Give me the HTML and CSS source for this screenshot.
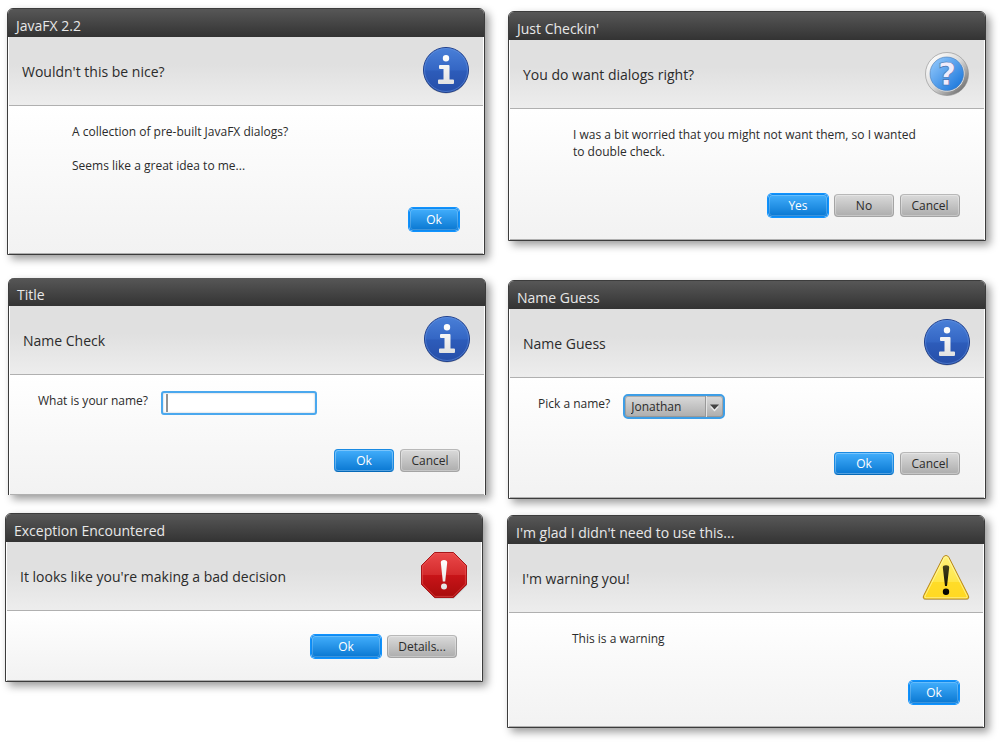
FILE: index.html
```html
<!DOCTYPE html>
<html lang="en">
<head>
<meta charset="utf-8">
<title>JavaFX dialogs</title>
<link rel="stylesheet" href="styles.css">
</head>
<body>
<svg class="defs" aria-hidden="true">
  <defs>
    <linearGradient id="blue" x1="0" y1="0" x2="0" y2="1">
      <stop offset="0" stop-color="#4a80d8"/><stop offset=".5" stop-color="#3466c4"/>
      <stop offset=".52" stop-color="#2d5cba"/><stop offset="1" stop-color="#264ea8"/>
    </linearGradient>
    <linearGradient id="red" x1="0" y1="0" x2="0" y2="1">
      <stop offset="0" stop-color="#ea4a4a"/><stop offset=".5" stop-color="#d42a2c"/>
      <stop offset=".51" stop-color="#c81418"/><stop offset="1" stop-color="#a80c0c"/>
    </linearGradient>
    <linearGradient id="yellow" x1="0" y1="0" x2="0" y2="1">
      <stop offset="0" stop-color="#fff27a"/><stop offset=".6" stop-color="#ffe648"/>
      <stop offset=".62" stop-color="#ffdc28"/><stop offset="1" stop-color="#ffd822"/>
    </linearGradient>
    <linearGradient id="silver" x1="0" y1="0" x2="1" y2="1">
      <stop offset=".1" stop-color="#ffffff"/><stop offset=".5" stop-color="#d8d8d8"/><stop offset=".9" stop-color="#6c6c6c"/>
    </linearGradient>
    <linearGradient id="sky" x1="0" y1="0" x2="1" y2="1">
      <stop offset=".1" stop-color="#8cc4fa"/><stop offset=".9" stop-color="#1c78dc"/>
    </linearGradient>
    <linearGradient id="white" x1="0" y1="0" x2="0" y2="1">
      <stop offset="0" stop-color="#ffffff"/><stop offset="1" stop-color="#e2e2e2"/>
    </linearGradient>
    <linearGradient id="ink" x1="0" y1="0" x2="0" y2="1">
      <stop offset="0" stop-color="#45421c"/><stop offset=".6" stop-color="#1c1a08"/><stop offset="1" stop-color="#000000"/>
    </linearGradient>
    <symbol id="info" viewBox="0 0 48 48">
      <circle cx="24" cy="25" r="22.5" fill="#000" opacity=".25"/>
      <circle cx="24" cy="24" r="22.5" fill="url(#blue)" stroke="#1f3f8c"/>
      <circle cx="24" cy="24" r="21.5" fill="none" stroke="#6a98e4" stroke-opacity=".5"/>
      <path fill="url(#white)" d="M24 9a3.2 3.2 0 1 1 0 6.400a3.200 3.200 0 1 1 0-6.400zM18 19h8.500q1 0 1 1v13.500h3.500q1 0 1 1v2.500q0 1-1 1h-14q-1 0-1-1v-2.500q0-1 1-1h4.500v-10.500h-3.500q-1 0-1-1v-2q0-1 1-1z"/>
    </symbol>
    <symbol id="error" viewBox="0 0 48 48">
      <path d="M15 2.500h19l13 13v19l-13 13h-19l-13-13v-19z" fill="#000" opacity=".2"/>
      <path d="M14.500 1.500h19l13 13v19l-13 13h-19l-13-13v-19z" fill="url(#red)" stroke="#a81618"/>
      <path d="M15 2.600h18l12.400 12.400v18l-12.400 12.400h-18l-12.400-12.400v-18z" fill="none" stroke="#f06060" stroke-opacity=".5"/>
      <path fill="url(#white)" d="M20.800 11.500q0-2.500 3.200-2.500t3.200 2.500l-2 19h-2.400zM24 32.500a3 3 0 1 1 0 6a3 3 0 1 1 0-6z"/>
    </symbol>
    <symbol id="warning" viewBox="0 0 48 48">
      <path d="M24 3q2 0 3 2l19.500 38q1.500 4-2 4h-41q-3.500 0-2-4l19.500-38q1-2 3-2z" fill="#000" opacity=".15"/>
      <path d="M24 2.500q2 0 3 2l19.300 38q1.500 3.500-2 3.500h-40.600q-3.500 0-2-3.500l19.300-38q1-2 3-2z" fill="url(#yellow)" stroke="#b8871c"/>
      <path d="M24 3.800q1.200 0 2 1.600l19 37.600q.7 1.800-1 1.800h-40q-1.700 0-1-1.800l19-37.600q.8-1.600 2-1.600z" fill="none" stroke="#fff8b0" stroke-opacity=".7"/>
      <path fill="url(#ink)" d="M20.800 14.500q0-2.300 3.200-2.300t3.200 2.300l-2.200 18.500h-2zM24 35.500a3.200 3.200 0 1 1 0 6.400a3.200 3.200 0 1 1 0-6.400z"/>
    </symbol>
    <symbol id="question" viewBox="0 0 48 48">
      <circle cx="24" cy="25" r="21.500" fill="url(#silver)" stroke="#8c8c8c" stroke-opacity=".6"/>
      <circle cx="24" cy="25" r="17.500" fill="#f4f4f4"/>
      <circle cx="23.800" cy="24.800" r="16.800" fill="url(#sky)" stroke="#4878b0" stroke-opacity=".6"/>
      <text class="glyph" x="24" y="36" text-anchor="middle">?</text>
    </symbol>
  </defs>
</svg>
<main class="desktop">
  <section class="dialog dialog-intro">
    <h2 class="titlebar">JavaFX 2.2</h2>
    <header class="masthead"><p>Wouldn't this be nice?</p><svg class="icon"><use href="#info"/></svg></header>
    <div class="body">
      <div class="message"><p>A collection of pre-built JavaFX dialogs?</p><p>Seems like a great idea to me...</p></div>
      <div class="buttons buttons-small"><button class="btn primary focused">Ok</button></div>
    </div>
  </section>
  <section class="dialog dialog-check">
    <h2 class="titlebar">Just Checkin'</h2>
    <header class="masthead"><p>You do want dialogs right?</p><svg class="icon"><use href="#question"/></svg></header>
    <div class="body">
      <div class="message"><p>I was a bit worried that you might not want them, so I wanted to double check.</p></div>
      <div class="buttons"><button class="btn primary focused">Yes</button><button class="btn">No</button><button class="btn">Cancel</button></div>
    </div>
  </section>
  <section class="dialog dialog-name borderless">
    <h2 class="titlebar">Title</h2>
    <header class="masthead"><p>Name Check</p><svg class="icon"><use href="#info"/></svg></header>
    <div class="body">
      <div class="form"><label for="name">What is your name?</label><input class="field" id="name" type="text"></div>
      <div class="buttons"><button class="btn primary">Ok</button><button class="btn">Cancel</button></div>
    </div>
  </section>
  <section class="dialog dialog-guess">
    <h2 class="titlebar">Name Guess</h2>
    <header class="masthead"><p>Name Guess</p><svg class="icon"><use href="#info"/></svg></header>
    <div class="body">
      <div class="form">
        <label for="pick">Pick a name?</label>
        <div class="combo">
          <select id="pick"><option>Jonathan</option></select>
          <svg class="arrow" viewBox="0 0 18 21" aria-hidden="true"><path d="M.5 0v21" stroke="#999"/><path d="M1.500 0v21" stroke="#e4e4e4"/><path d="M5 10.500h9l-4.500 5z" fill="#eee"/><path d="M5 8.500h9l-4.500 5z" fill="#444"/></svg>
        </div>
      </div>
      <div class="buttons"><button class="btn primary">Ok</button><button class="btn">Cancel</button></div>
    </div>
  </section>
  <section class="dialog dialog-error">
    <h2 class="titlebar">Exception Encountered</h2>
    <header class="masthead"><p>It looks like you're making a bad decision</p><svg class="icon"><use href="#error"/></svg></header>
    <div class="body">
      <div class="buttons buttons-wide"><button class="btn primary focused">Ok</button><button class="btn">Details...</button></div>
    </div>
  </section>
  <section class="dialog dialog-warning">
    <h2 class="titlebar">I'm glad I didn't need to use this...</h2>
    <header class="masthead"><p>I'm warning you!</p><svg class="icon"><use href="#warning"/></svg></header>
    <div class="body">
      <div class="message"><p>This is a warning</p></div>
      <div class="buttons buttons-small"><button class="btn primary focused">Ok</button></div>
    </div>
  </section>
</main>
</body>
</html>
```
FILE: styles.css
```css
* { box-sizing: border-box; }
body {
  margin: 0;
  background: #fff;
  color: #2b2b2b;
  font: 12px/17px "Open Sans", "Noto Sans", sans-serif;
}
h2, p { margin: 0; font-weight: 400; }
.defs { position: absolute; width: 0; height: 0; }
.desktop { position: relative; min-height: 100vh; }

/* Windows placed freely on the desktop */
.dialog {
  position: absolute;
  width: 47.8%;
  border: 1px solid #3c3c3c;
  border-radius: 6px 6px 0 0;
  background: #fff;
  box-shadow: 4px 4px 8px rgba(0, 0, 0, .4);
}
.dialog-intro { left: 7px; top: 8px; }
.dialog-check { left: 50.8%; top: 11px; }
.dialog-name { left: 8px; top: 278px; }
.dialog-guess { left: 50.8%; top: 280px; }
.dialog-error { left: 5px; top: 513px; }
.dialog-warning { left: 50.7%; top: 515px; }
.borderless { border-top: 0; border-bottom: 0; }

.titlebar {
  height: 28px;
  padding: 7px 8px 0;
  border-radius: 5px 5px 0 0;
  background: linear-gradient(#575757, #333);
  color: #e8e8e8;
  font-size: 14px;
  line-height: 20px;
}
.masthead {
  display: flex;
  align-items: center;
  justify-content: space-between;
  height: 69px;
  margin: 0 1px;
  padding: 0 13px 2px;
  border-bottom: 1px solid #b0b0b0;
  background: linear-gradient(#e0e0e0 40%, #ededed);
  font-size: 14px;
  line-height: 20px;
}
.masthead p { padding-top: 3px; }
.icon { width: 48px; height: 48px; }
.glyph { font: 700 32px "DejaVu Sans", sans-serif; fill: #f0ecfc; stroke: #3a6cae; stroke-width: .6px; }

.body {
  margin: 0 1px;
  padding: 17px 24px 22px 63px;
  border-bottom: 1px solid #b0b0b0;
  background: linear-gradient(#fff, #f2f2f2);
}
.message { display: grid; gap: 17px; margin-bottom: 34px; max-width: 354px; }
.form { display: flex; align-items: flex-start; gap: 13px; height: 24px; margin: -1px 0 34px -35px; }
.form label { padding-top: 1px; }
.dialog-error .body { padding-top: 24px; }

.buttons { display: flex; justify-content: flex-end; gap: 6px; }
.btn {
  min-width: 60px;
  height: 23px;
  padding: 0 8px;
  border: 1px solid #a4a4a4;
  border-top-color: #b8b8b8;
  border-radius: 4px;
  background: linear-gradient(#dadada, #adadad);
  box-shadow: inset 0 0 0 1px rgba(255, 255, 255, .3);
  color: #2b2b2b;
  font: inherit;
}
.buttons-small .btn { min-width: 50px; }
.buttons-wide .btn { min-width: 70px; }
.btn.primary {
  border-color: #1a8ae2;
  border-bottom-color: #0569b8;
  background: linear-gradient(#42aefc, #0a78d2);
  color: #fff;
}
.btn.focused {
  border-color: #0f8af0;
  box-shadow: 0 0 0 1px #0f93ff, inset 0 0 0 1px rgba(255, 255, 255, .2);
}

.field {
  width: 156px;
  height: 24px;
  padding: 0 6px;
  border: 2px solid #4aa8ee;
  border-radius: 3px;
  background: linear-gradient(#929292, #929292) 3px 1px / 2px 18px no-repeat, #fff;
  box-shadow: inset 0 0 2px #b0b8c0;
  font: inherit;
  outline: 0;
}
.combo { position: relative; }
.combo select {
  appearance: none;
  width: 102px;
  height: 25px;
  padding: 0 26px 0 6px;
  border: 2px solid #3e9ee6;
  border-radius: 5px;
  background: linear-gradient(#dadada, #adadad);
  box-shadow: inset 0 0 0 1px rgba(130, 130, 130, .5);
  color: #2b2b2b;
  font: inherit;
}
.arrow {
  position: absolute;
  top: 2px;
  right: 2px;
  width: 18px;
  height: 21px;
  pointer-events: none;
}
```
